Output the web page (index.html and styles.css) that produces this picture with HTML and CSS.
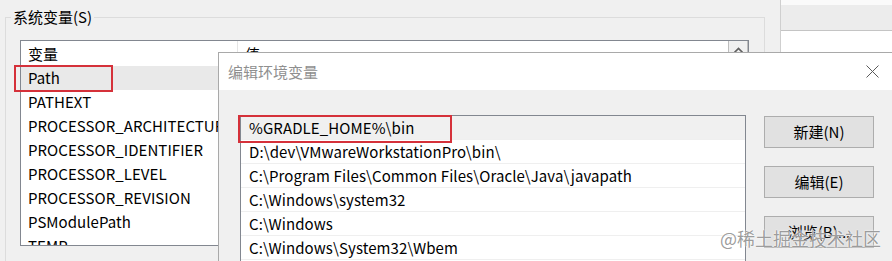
FILE: index.html
```html
<!DOCTYPE html>
<html lang="zh-CN">
<head>
<meta charset="utf-8">
<title>编辑环境变量</title>
<link rel="stylesheet" href="styles.css">
</head>
<body>
<div class="screen">
  <div class="mainwin">
    <fieldset class="group">
      <legend>系统变量(S)</legend>
      <div class="varlist">
        <div class="cols">
          <div class="hdr"><div class="hc c1">变量</div><div class="hc c2">值</div></div>
          <div class="row sel">Path</div>
          <div class="row">PATHEXT</div>
          <div class="row">PROCESSOR_ARCHITECTURE</div>
          <div class="row">PROCESSOR_IDENTIFIER</div>
          <div class="row">PROCESSOR_LEVEL</div>
          <div class="row">PROCESSOR_REVISION</div>
          <div class="row">PSModulePath</div>
          <div class="row">TEMP</div>
        </div>
        <div class="vscroll">
          <div class="sbtn"><svg width="9" height="6" viewBox="0 0 9 6"><path d="M0.5 5.5 L4.5 1.5 L8.5 5.5" fill="none" stroke="#606060" stroke-width="1.6"/></svg></div>
        </div>
      </div>
    </fieldset>
  </div>
  <div class="sidewin">
    <div class="strip"></div>
    <div class="stitle"></div>
    <div class="sbody"></div>
  </div>

  <div class="dialog">
    <div class="titlebar">
      <div class="title">编辑环境变量</div>
      <div class="close"><svg width="13" height="13" viewBox="0 0 13 13"><path d="M0.5 0.5 L12.5 12.5 M12.5 0.5 L0.5 12.5" stroke="#5a5a5a" stroke-width="1" fill="none"/></svg></div>
    </div>
    <div class="dbody">
      <div class="pathlist">
        <div class="prow sel">%GRADLE_HOME%\bin</div>
        <div class="prow">D:\dev\VMwareWorkstationPro\bin\</div>
        <div class="prow">C:\Program Files\Common Files\Oracle\Java\javapath</div>
        <div class="prow">C:\Windows\system32</div>
        <div class="prow">C:\Windows</div>
        <div class="prow">C:\Windows\System32\Wbem</div>
      </div>
      <div class="buttons">
        <div class="btn">新建(N)</div>
        <div class="btn">编辑(E)</div>
        <div class="btn">浏览(B)...</div>
      </div>
    </div>
  </div>

  <div class="mark mark-path"></div>
  <div class="mark mark-gradle"></div>
  <div class="watermark">@稀土掘金技术社区</div>
</div>
</body>
</html>
```

FILE: styles.css
```css
html, body {
  margin: 0;
  padding: 0;
}
body {
  width: 892px;
  height: 261px;
  overflow: hidden;
  background: #f0f0f0;
  font-family: "Noto Sans CJK SC", "Liberation Sans", sans-serif;
  font-size: 15px;
  color: #000;
}
.screen {
  position: relative;
  display: flex;
  width: 892px;
  height: 261px;
  overflow: hidden;
}

/* background window */
.mainwin {
  width: 780px;
  flex: none;
  padding-top: 7px;
  box-sizing: border-box;
}
.group {
  margin: 0 0 0 5px;
  padding: 0;
  width: 760px;
  height: 300px;
  min-width: 0;
  box-sizing: border-box;
  border: 1px solid #dcdcdc;
}
.group legend {
  margin-left: 5px;
  padding: 0 2px;
  height: 20px;
  line-height: 20px;
}
.varlist {
  margin: 13px 0 0 14px;
  width: 729px;
  height: 206px;
  box-sizing: border-box;
  border: 1px solid #828790;
  background: #fff;
  display: flex;
  overflow: hidden;
}
.cols {
  flex: 1;
  min-width: 0;
  overflow: hidden;
}
.hdr {
  display: flex;
  height: 25px;
}
.hc {
  line-height: 25px;
  padding-left: 7px;
}
.c1 {
  width: 217px;
  box-sizing: border-box;
  border-right: 1px solid #e5e5e5;
}
.c2 {
  flex: 1;
}
.row {
  height: 24px;
  line-height: 24px;
  padding-left: 7px;
  white-space: nowrap;
  letter-spacing: 0.05px;
}
.row.sel {
  background: #e9e9e9;
}
.vscroll {
  width: 20px;
  flex: none;
  background: #f0f0f0;
}
.sbtn {
  height: 17px;
  display: flex;
  align-items: center;
  justify-content: center;
  border: 1px solid #bdbdbd;
  border-top: none;
  background: #f0f0f0;
}

/* window at the right */
.sidewin {
  flex: 1;
  display: flex;
  flex-direction: column;
  border-left: 1px solid #cfcfcf;
  box-shadow: inset 3px 0 3px -2px rgba(0, 0, 0, 0.12);
}
.strip {
  height: 5px;
  background: #fafafa;
}
.stitle {
  height: 25px;
  background: #ececec;
  border-bottom: 1px solid #c4c4c4;
}
.sbody {
  flex: 1;
  background: #fff;
}

/* dialog */
.dialog {
  position: absolute;
  left: 218px;
  top: 52px;
  width: 678px;
  height: 260px;
  box-sizing: border-box;
  border: 1px solid #a9a9a9;
  background: #f0f0f0;
  display: flex;
  flex-direction: column;
  z-index: 2;
}
.titlebar {
  height: 37px;
  flex: none;
  background: #fff;
  display: flex;
  align-items: center;
}
.title {
  flex: 1;
  padding-left: 9px;
  color: #8f8f8f;
  line-height: 20px;
}
.close {
  width: 46px;
  height: 37px;
  display: flex;
  align-items: center;
  justify-content: center;
}
.dbody {
  display: flex;
  gap: 18px;
  padding: 25px 0 0 21px;
}
.pathlist {
  width: 506px;
  height: 200px;
  box-sizing: border-box;
  border: 1px solid #828790;
  background: #fff;
}
.prow {
  height: 24px;
  line-height: 24px;
  padding-left: 8px;
  white-space: nowrap;
  box-sizing: border-box;
  border-bottom: 1px solid #efefef;
  letter-spacing: 0.1px;
}
.prow.sel {
  background: #f0f0f0;
}
.buttons {
  display: flex;
  flex-direction: column;
  gap: 18px;
  margin-top: 1px;
}
.btn {
  width: 110px;
  height: 32px;
  box-sizing: border-box;
  border: 1px solid #adadad;
  background: #e1e1e1;
  display: flex;
  align-items: center;
  justify-content: center;
  line-height: 20px;
}

/* red highlight frames */
.mark {
  position: absolute;
  box-sizing: border-box;
  border: 2px solid #d5313a;
  z-index: 3;
}
.mark-path {
  left: 14px;
  top: 65px;
  width: 99px;
  height: 27px;
}
.mark-gradle {
  left: 238px;
  top: 115px;
  width: 214px;
  height: 28px;
}

.watermark {
  position: absolute;
  left: 720px;
  top: 226px;
  font-size: 18px;
  line-height: 24px;
  color: rgba(130, 130, 130, 0.8);
  text-shadow: 0 0 1px #fff, 0 0 2px #fff;
  z-index: 4;
  white-space: nowrap;
}
```
